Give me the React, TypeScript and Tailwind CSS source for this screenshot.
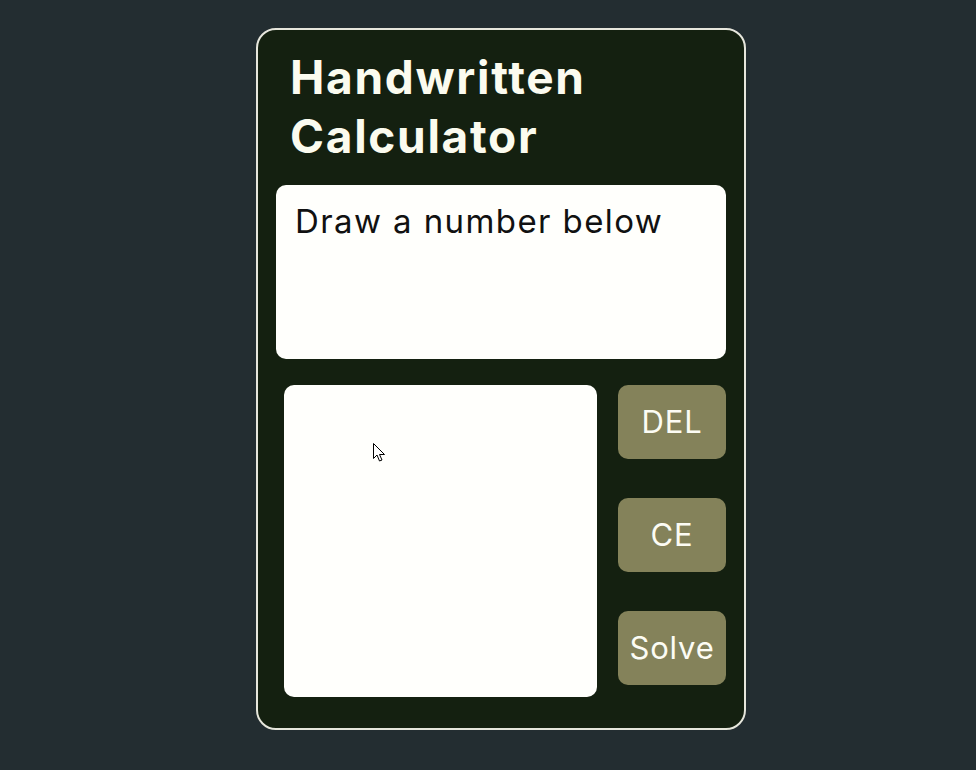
import React from "react";

export default function App() {
  return (
    <div className="w-[976px] h-[770px] bg-[#232d31] overflow-hidden" style={{ fontFamily: "Inter, 'Noto Sans', sans-serif" }}>
      <div className="ml-[256px] pt-[28px]">
        <div className="w-[490px] h-[702px] rounded-[20px] border-2 border-[#e6e6dc] bg-[#142010] px-[18px] pt-[18px]">
          <h1 className="pl-[14px] text-[46px] leading-[59px] font-bold tracking-[1.7px] text-[#fbfbef]">
            Handwritten
            <br />
            Calculator
          </h1>
          <div className="mt-[19px] h-[174px] rounded-[10px] bg-[#fffffc] pl-[19px] pt-[16px]">
            <p className="text-[33px] leading-[40px] text-[#111] tracking-[1.4px]">Draw a number below</p>
          </div>
          <div className="mt-[26px] flex">
            <div className="relative ml-[8px] w-[313px] h-[312px] rounded-[10px] bg-[#fffffc]">
              <svg className="absolute left-[89px] top-[58px]" width="13" height="20" viewBox="0 0 13 20">
                <path d="M0.5 0.5 L0.5 15.5 L4 12 L6.5 18 L9 17 L6.5 11.5 L11.5 11.5 Z" fill="#fff" stroke="#000" strokeWidth="1" />
              </svg>
            </div>
            <div className="ml-[21px] flex flex-col gap-[39px]">
              {["DEL", "CE", "Solve"].map((t) => (
                <div key={t} className="w-[108px] h-[74px] rounded-[10px] bg-[#84825a] flex items-center justify-center text-[31px] tracking-[0.8px] text-[#fcfcf4]">
                  {t}
                </div>
              ))}
            </div>
          </div>
        </div>
      </div>
    </div>
  );
}
